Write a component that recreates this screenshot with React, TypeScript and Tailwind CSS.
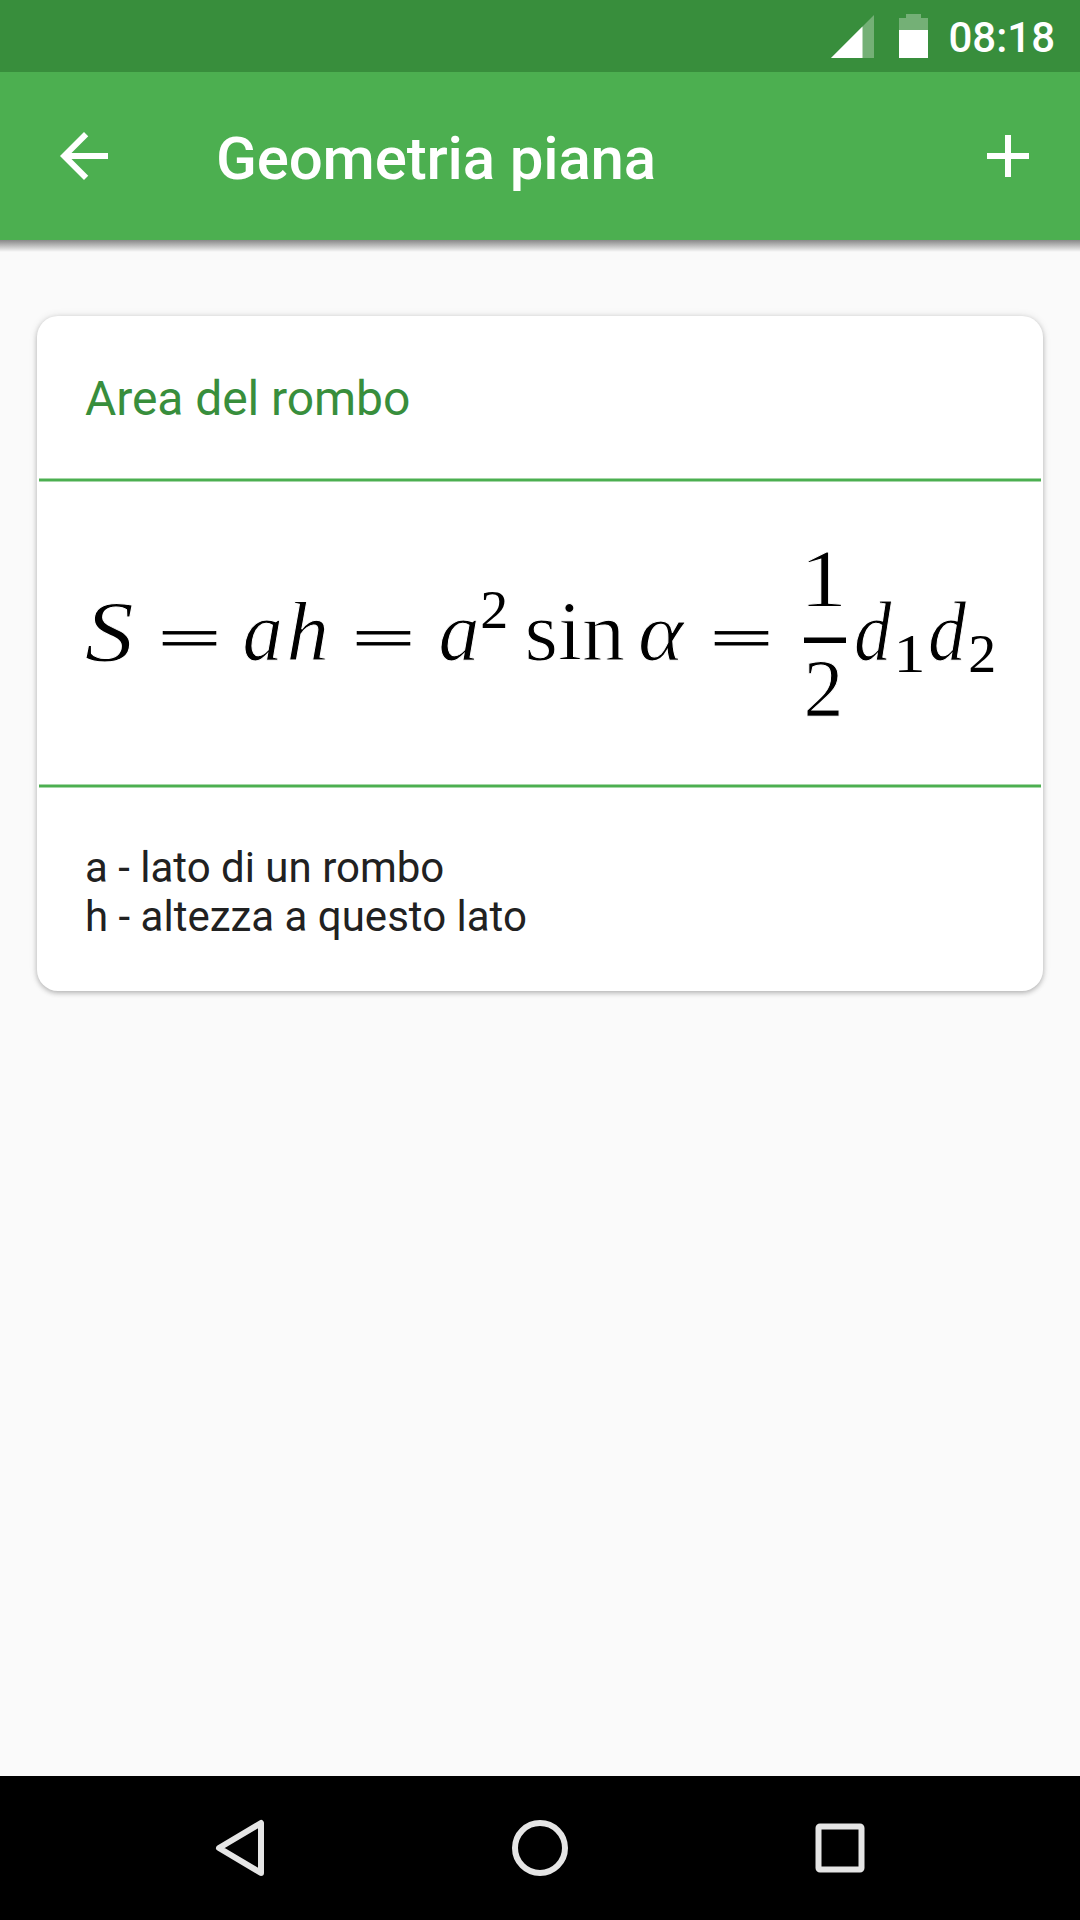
import React from 'react';

interface Glyph {
  text: string;
  x: number;
  y: number;
  size: number;
  width?: number;
  italic?: boolean;
}

interface FormulaCardProps {
  title: string;
  description: string[];
  children: React.ReactNode;
}

// Each symbol is placed on its own baseline, like a typeset formula
const glyphs: Glyph[] = [
  { text: 'S', x: 84.8, y: 660.5, size: 86, width: 49, italic: true },
  { text: 'a', x: 242.6, y: 660, size: 84, width: 40.3, italic: true },
  { text: 'h', x: 286.4, y: 660, size: 84, width: 42.5, italic: true },
  { text: 'a', x: 438.6, y: 660, size: 84, width: 41, italic: true },
  { text: '2', x: 480.3, y: 628, size: 55, width: 28 },
  { text: 'sin', x: 524.6, y: 660, size: 84, width: 100.5 },
  { text: 'α', x: 638, y: 660, size: 82, width: 45.5, italic: true },
  { text: '1', x: 799.4, y: 606, size: 83, width: 47.7 },
  { text: '2', x: 803.6, y: 716, size: 83, width: 40 },
  { text: 'd', x: 853.9, y: 660, size: 84, width: 37.4, italic: true },
  { text: '1', x: 893.6, y: 672, size: 54, width: 32 },
  { text: 'd', x: 927.9, y: 660, size: 84, width: 38.1, italic: true },
  { text: '2', x: 968.3, y: 672, size: 54, width: 28 },
];

const equals = [153, 347, 705];

const RhombusFormula: React.FC = () => (
  <svg viewBox="37 482 1006 302" className="block w-full h-[302px]">
    {glyphs.map((g, i) => (
      <text
        key={i}
        x={g.x}
        y={g.y}
        fontSize={g.size}
        fontStyle={g.italic ? 'italic' : 'normal'}
        fontFamily="'Liberation Serif', serif"
        stroke="#fff"
        strokeWidth={g.size > 60 ? 1 : 0}
        textLength={g.width}
        lengthAdjust="spacingAndGlyphs"
      >
        {g.text}
      </text>
    ))}
    {equals.map((x) => (
      <text
        key={x}
        x={x}
        y={662}
        fontSize={70}
        fontWeight={300}
        fontFamily="Lato, sans-serif"
        stroke="#000"
        strokeWidth={0.8}
        textLength={73}
        lengthAdjust="spacingAndGlyphs"
      >
        =
      </text>
    ))}
    <rect x="804" y="637.5" width="42" height="5.5" />
  </svg>
);

const StatusBar: React.FC = () => (
  <div className="flex items-center justify-end h-[72px] pr-[25px] bg-[#388e3c]">
    <svg viewBox="0 0 43 43" className="w-[43px] h-[43px] mr-[25px]">
      <path d="M0 43 43 0V43Z" fill="#fff" fillOpacity="0.3" />
      <path d="M0 43 31.5 11.5V43Z" fill="#fff" />
    </svg>
    <svg viewBox="0 0 29 44" className="w-[29px] h-[44px] mr-5">
      <path d="M7 0H22V4H29V16H0V4H7Z" fill="#fff" fillOpacity="0.3" />
      <path d="M0 16H29V44H0Z" fill="#fff" />
    </svg>
    <span className="pt-[2px] text-[42px] leading-[49px] font-medium text-white">08:18</span>
  </div>
);

const AppBar: React.FC<{ title: string }> = ({ title }) => (
  <header className="flex items-center h-[168px] pl-12 pr-9 bg-[#4caf50] text-white">
    <button>
      <svg viewBox="0 0 24 24" fill="currentColor" className="w-[72px] h-[72px]">
        <path d="M20 11H7.83l5.59-5.59L12 4l-8 8 8 8 1.41-1.41L7.83 13H20v-2z" />
      </svg>
    </button>
    <h1 className="flex-1 ml-24 pt-1.5 text-[60px] leading-[70px] font-medium tracking-[-0.15px]">{title}</h1>
    <button>
      <svg viewBox="0 0 24 24" fill="currentColor" className="w-[72px] h-[72px]">
        <path d="M19 13h-6v6h-2v-6H5v-2h6V5h2v6h6v2z" />
      </svg>
    </button>
  </header>
);

const FormulaCard: React.FC<FormulaCardProps> = ({ title, description, children }) => (
  <section className="h-[675px] rounded-[21px] bg-white shadow-[0_2px_5px_rgba(0,0,0,0.24),0_0_8px_rgba(0,0,0,0.1)]">
    <h2 className="h-[162px] pt-[55px] pl-12 text-[48px] leading-[56px] tracking-[-0.08px] text-[#388e3c]">{title}</h2>
    <div className="h-1 mx-[2px] bg-[#4caf50] border-y border-[#a6d7a8]" />
    {children}
    <div className="h-1 mx-[2px] bg-[#4caf50] border-y border-[#a6d7a8]" />
    <div className="pt-[55px] pl-12 text-[42px] leading-[49px] text-[#212121]">
      {description.map((line) => (
        <p key={line}>{line}</p>
      ))}
    </div>
  </section>
);

const NavigationBar: React.FC = () => (
  <nav className="grid grid-cols-3 items-center justify-items-center h-36 px-[90px] bg-black">
    <svg viewBox="0 0 60 60" className="w-[60px] h-[60px]" fill="none" stroke="#e5e5e5" strokeWidth="6">
      <path d="M51 5V55L9 30Z" strokeLinejoin="round" />
    </svg>
    <svg viewBox="0 0 60 60" className="w-[60px] h-[60px]" fill="none" stroke="#e5e5e5" strokeWidth="6">
      <circle cx="30" cy="30" r="25" />
    </svg>
    <svg viewBox="0 0 60 60" className="w-[60px] h-[60px]" fill="none" stroke="#e5e5e5" strokeWidth="6">
      <rect x="8.5" y="8.5" width="43" height="43" rx="1.5" />
    </svg>
  </nav>
);

export default function App() {
  return (
    <div className="flex flex-col w-[1080px] h-[1920px] bg-[#fafafa] font-['Roboto',sans-serif]">
      <StatusBar />
      <AppBar title="Geometria piana" />
      <div className="h-3 bg-linear-to-b from-[#888888] to-[#fafafa]" />
      <main className="flex-1 px-[37px] pt-16">
        <FormulaCard
          title="Area del rombo"
          description={['a - lato di un rombo', 'h - altezza a questo lato']}
        >
          <RhombusFormula />
        </FormulaCard>
      </main>
      <NavigationBar />
    </div>
  );
}
